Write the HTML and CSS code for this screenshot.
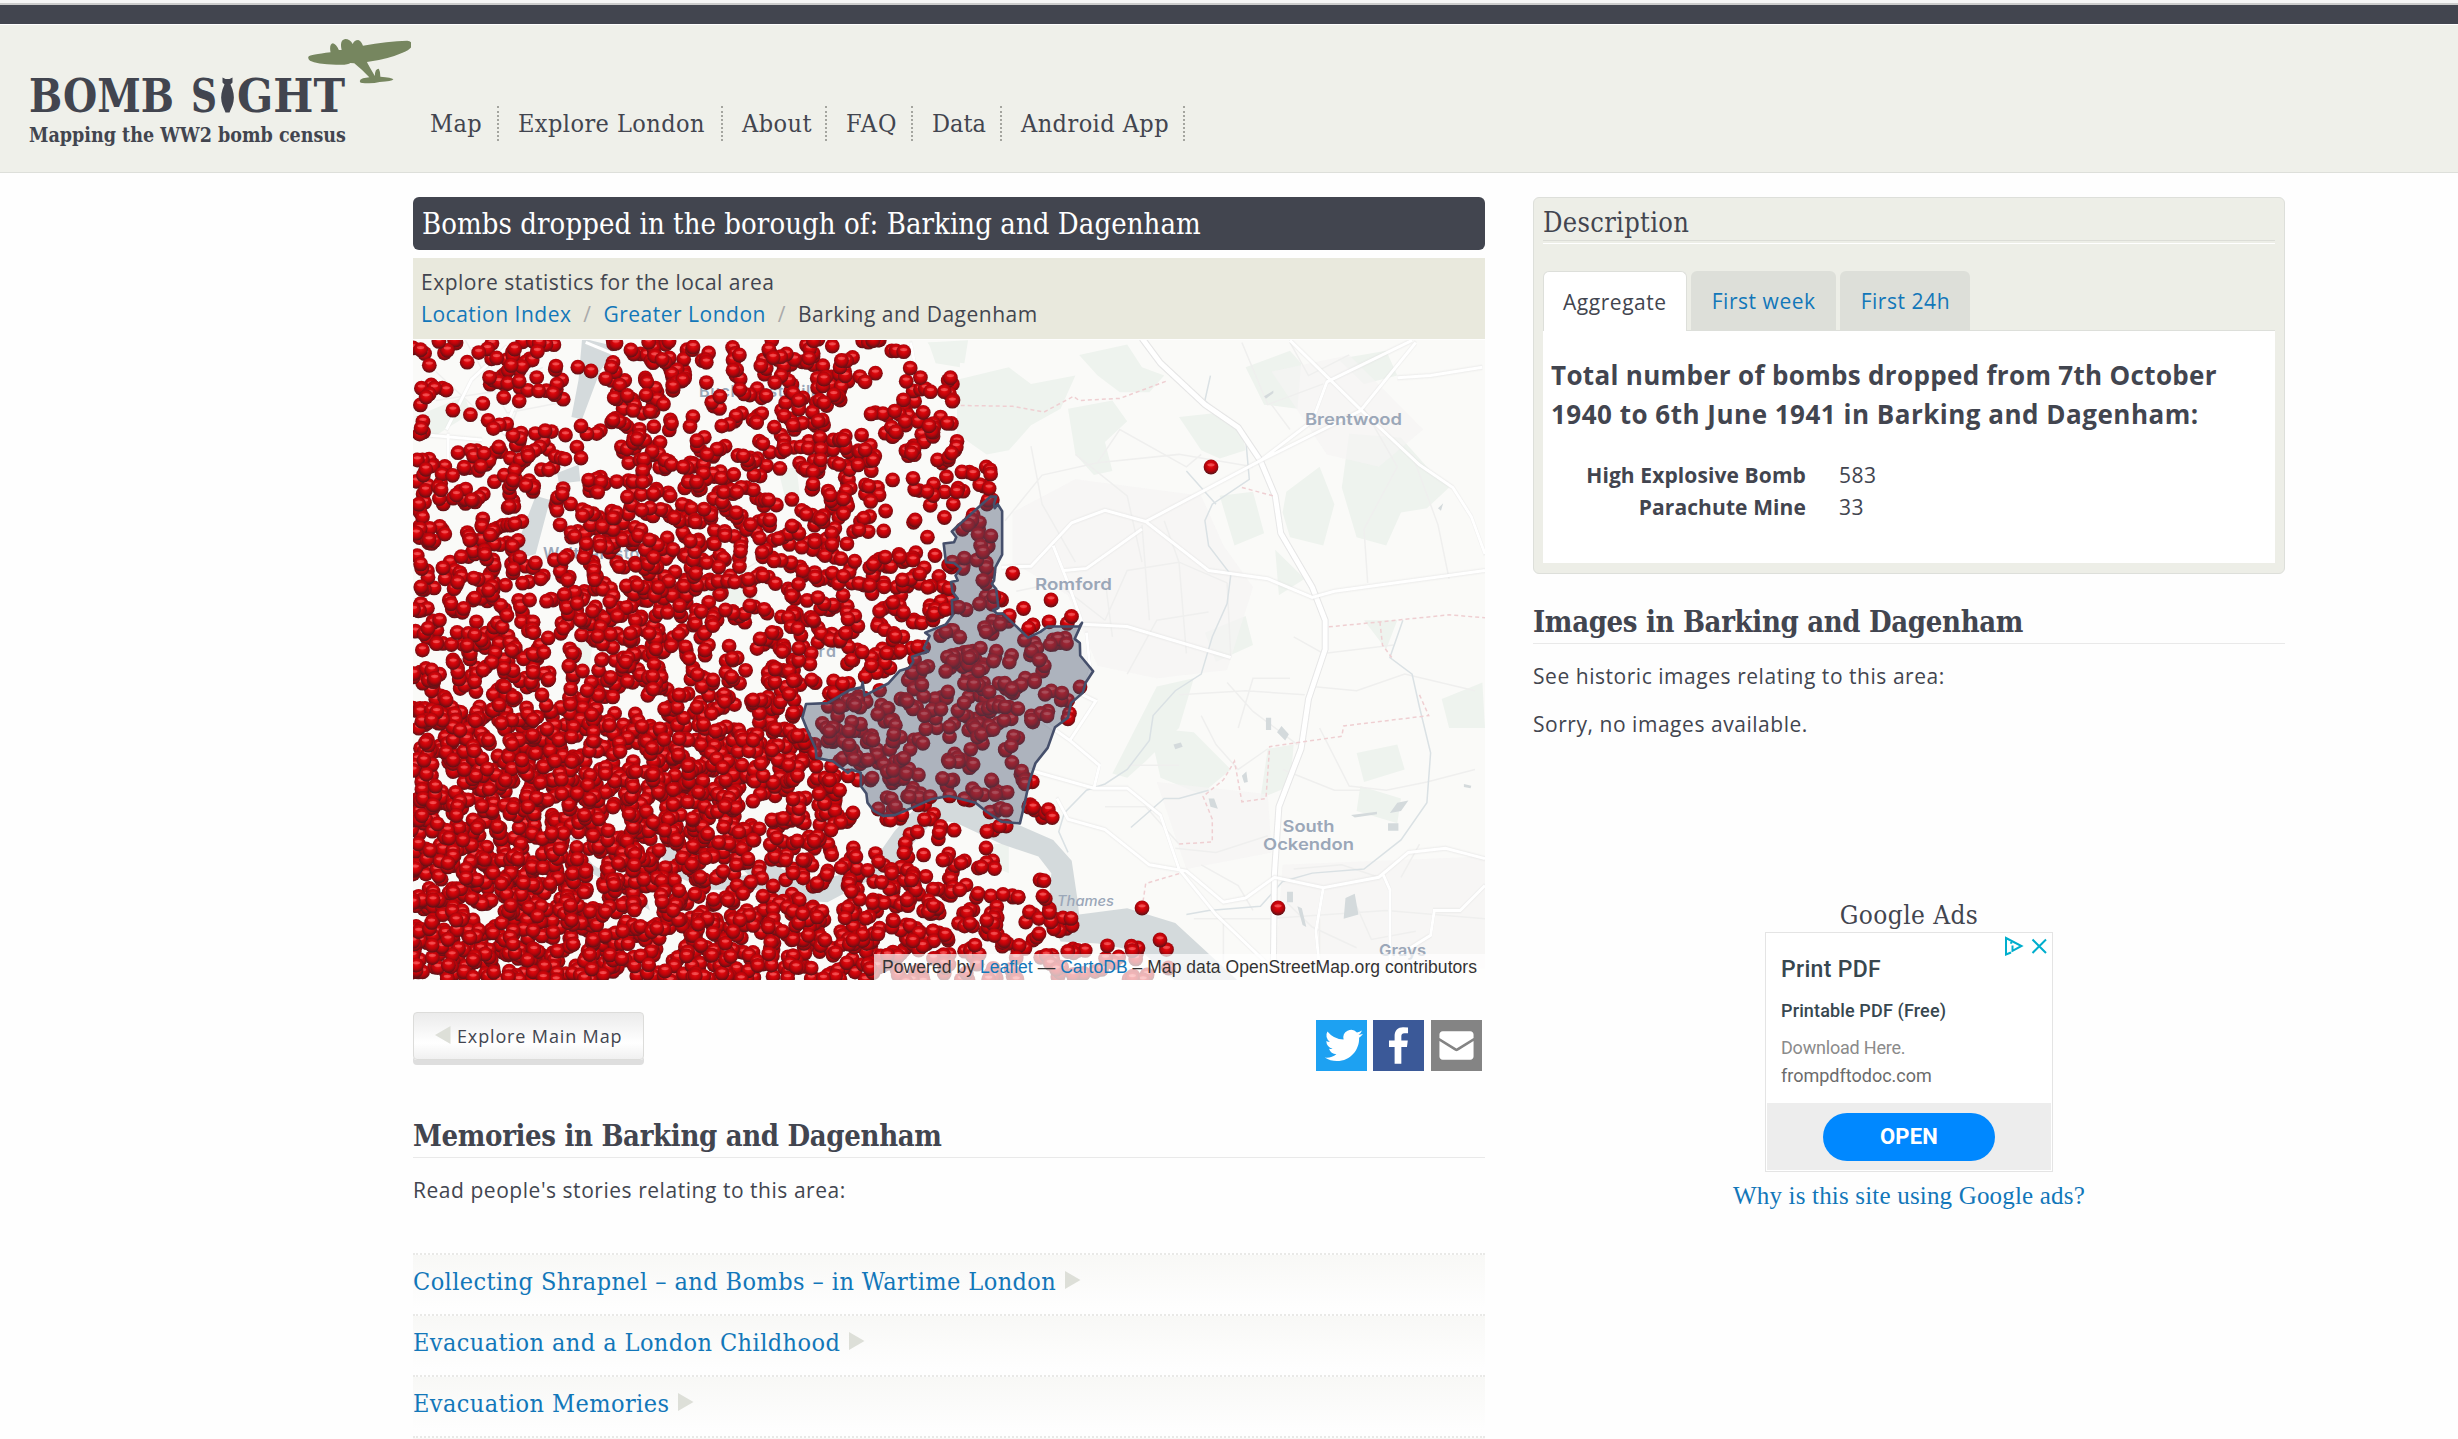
FILE: index.html
```html
<!DOCTYPE html>
<html lang="en">
<head>
<meta charset="utf-8">
<title>Bomb Sight - Barking and Dagenham</title>
<link rel="stylesheet" href="styles.css">
</head>
<body>
<div class="chrome-edge"></div>
<div class="topbar"></div>
<header class="header">
  <svg class="logo" width="386" height="130" viewBox="0 0 386 130" role="img" aria-label="Bomb Sight">
    <g class="logo-name">
      <text x="4" y="87" textLength="145" lengthAdjust="spacingAndGlyphs">BOMB</text>
      <text x="166" y="87" textLength="26" lengthAdjust="spacingAndGlyphs">S</text>
      <text x="212" y="87" textLength="108" lengthAdjust="spacingAndGlyphs">GHT</text>
    </g>
    <path class="logo-bomb" d="M197.500 52.500l3 1.500h4l3-1.500v5l-2 2c3 6 4 12 3 17-1 5-3 8-4 11h-4c-1-3-3-6-4-11-1-5 0-11 3-17l-2-2z"/>
    <text class="logo-tag" x="4" y="117" textLength="317" lengthAdjust="spacingAndGlyphs">Mapping the WW2 bomb census</text>
    <path class="logo-plane" transform="translate(-25 -25) scale(.3954 .3333)" d="M780 170Q785 164 836 157Q832 132 842 130Q850 132 857 150L864 150Q858 120 873 117Q885 117 892 132Q896 120 906 120Q914 124 918 137Q980 124 1030 122Q1042 124 1042 136Q1040 148 1018 158Q980 178 928 186Q932 196 948 228Q948 206 958 206Q962 214 962 230Q990 232 995 238Q992 244 960 246Q940 252 912 248Q906 240 918 235L934 232Q915 208 896 190L886 189Q880 196 850 194Q800 192 784 182Q778 176 780 170Z"/>
  </svg>
  <nav class="nav">
    <a class="n1">Map</a><a class="n2">Explore London</a><a class="n3">About</a><a class="n4">FAQ</a><a class="n5">Data</a><a class="n6">Android App</a>
  </nav>
</header>
<div class="page">
  <main class="main">
    <h1 class="title">Bombs dropped in the borough of: Barking and Dagenham</h1>
    <div class="crumbs">
      <div>Explore statistics for the local area</div>
      <div class="trail"><a>Location Index</a><i>/</i><a>Greater London</a><i>/</i><span>Barking and Dagenham</span></div>
    </div>
    <div class="map">
      <svg class="map-svg" width="1072" height="640" viewBox="0 0 1072 640">
        <defs>
          <radialGradient id="red" cx=".5" cy=".4" r=".6">
            <stop offset="0" stop-color="#ee2024"/><stop offset=".3" stop-color="#d8060b"/><stop offset=".6" stop-color="#b8040a"/><stop offset=".85" stop-color="#7c0d12"/><stop offset="1" stop-color="#551418"/>
          </radialGradient>
          <g id="ball"><circle r="7.400" fill="url(#red)"/><ellipse cy="-2.300" rx="3.600" ry="1.500" fill="#ff8080" opacity=".5"/></g>
        </defs>
        <g transform="translate(507 -10) scale(.37 .4146)">
          <g class="wood">
            <path d="M20 30L130 25L120 80L60 75ZM100 120L240 90L300 130L420 110L380 190L300 230L240 290L180 300L100 250ZM400 190L520 170L560 220L500 270L520 340L470 350L420 300ZM430 60L560 35L600 90L660 110L620 150L540 150L480 110ZM700 210L800 200L870 240L880 290L810 310L760 290ZM880 90L1000 50L1030 80L1020 190L930 180ZM1130 70L1260 50L1290 110L1200 130ZM1160 250L1300 260L1380 340L1430 380L1370 430L1300 440L1260 520L1180 500L1140 380ZM990 390L1080 330L1120 420L1090 520L1000 500L980 440ZM810 400L900 390L930 490L850 520ZM960 530L1040 600L970 640ZM770 730L880 690L900 760L800 800ZM1410 890L1520 850L1527 960L1430 960ZM1180 1020L1290 1000L1310 1060L1200 1090ZM940 1010L1010 1000L1000 1100L920 1130ZM640 860L740 840L700 960L610 1040L560 1080L520 1070ZM620 960L740 970L840 1060L760 1120L650 1080ZM1200 700L1290 700L1260 770ZM1190 1100L1300 1130L1290 1190L1180 1160ZM200 1240L240 1240L240 1310L190 1290Z"/>
            <path class="town" d="M250 440L420 360L760 400L820 520L900 620L830 820L640 840L480 810L400 640L250 560ZM980 1290L1527 1270V1540H960ZM640 1090L940 1120L950 1260L720 1300ZM950 100L1160 60L1360 240L1240 330L1100 300Z"/>
          </g>
          <g class="lane">
            <path d="M230 460L330 350L480 320L700 300L900 330M300 280L330 420L420 560M420 300L560 400L600 560M480 320L540 240L720 330L760 300M600 470L620 700M500 700L560 580L700 560L830 610M560 830L640 700L780 680M660 460L700 560L720 780M830 610L840 790M260 630L370 610L500 700M520 740L500 600M870 30L940 180L1090 130M950 180L1000 240M1160 60L1050 110L1000 30M1200 190L1290 330L1200 480L1210 610M1330 300L1400 470L1430 600M830 850L900 920L1020 1000M700 880L880 870L1040 880M1060 860L1180 870L1310 830L1500 870M1080 960L1160 1100L1260 1110L1370 1090L1500 1060M980 1060L1120 1110L1190 1110M760 930L800 1000L860 1060L940 1010M690 1250L800 1260L940 1220M500 1150L610 1150L700 1240M760 1290L860 1340L900 1400M1010 1300L1140 1290L1240 1320M1080 1420L1080 1540M1180 1390L1220 1470L1340 1450M1300 1320L1350 1240M990 1380L1060 1440L1180 1490M820 1420L820 1530M740 1420L940 1420L1260 1400L1527 1420M1010 740L1090 780L1280 760M1000 840L900 840L860 960M560 1050L700 1050"/>
          </g>
          <path class="stream" d="M785 110L770 170L880 260L890 360L790 420L770 460L780 520L840 590L830 660L790 740L760 830L690 870L630 930L620 990L560 1060L500 1095L450 1110L390 1165L375 1210L400 1260M720 340L800 420M570 1200L660 1130L700 1130L780 1110M1305 700L1270 790L1330 830L1350 910L1380 1020L1370 1140L1300 1230L1200 1300L1060 1310L980 1330L920 1390L780 1400L720 1410"/>
          <path class="pond" d="M935 935h14v30h-14zM965 970l12-15 20 20-10 15zM685 1000l20-5 5 10-20 6zM780 1130l15 0 10 25-20-5zM1270 1165l20-25 30-5-20 25zM1265 1190h28v18h-28zM1150 1370l25-10 10 50-40 10zM992 1355h16v25h-16zM1020 1390l12 5 12 45-10-5zM930 160l25-14v6l-20 14zM1400 430l14-12-6 18zM1470 1095l20 4-2 6-18-3zM1165 1170l70-8v6l-60 8zM870 1075l12-10 4 25-10 2z"/>
          <g class="road-case"><path d="M600 20L650 80L770 180L860 235L920 315L960 400L975 490L1060 620L1095 700L1095 770L1050 890L1030 1010L970 1150L958 1310L955 1540"/></g>
          <g class="road">
            <path class="wide" d="M600 20L650 80L770 180L860 235L920 315L960 400L975 490L1060 620L1095 700L1095 770L1050 890L1030 1010L970 1150L958 1310L955 1540"/>
            <path d="M220 572L300 570L410 465L500 435L610 462L920 315L1190 195L1340 30M610 462L780 580L940 600L1060 645L1120 630L1527 580M920 315L1060 220L1100 125L1330 25M1000 25L1200 200L1350 325L1440 380L1490 450L1527 540M1290 115L1380 110L1520 90M390 580L450 575L600 480M360 520L400 610L440 710L560 715L840 790M450 730L460 820L440 880L475 895L405 990L310 930M290 1060L470 1105L560 1105L650 1170L700 1300L800 1410L940 1530M370 1130L400 1180L500 1205L620 1290L720 1305L820 1380L880 1370L958 1320L1090 1345L1240 1320L1320 1260L1420 1250L1527 1275M405 990L485 1050L470 1105M1250 1310L1270 1350L1270 1540M1090 1345L1070 1450L1080 1540M1527 1340L1460 1400L1390 1400L1380 1460L1290 1510"/>
          </g>
          <path class="bound" d="M110 182L250 184L335 198L415 160L430 170L540 165L670 122M870 380L955 400M1105 716L1243 704L1430 687L1527 694M1243 704L1250 760L1275 790M1350 880L1375 930L1145 955L1140 980L945 1005L935 1130L870 1138L850 1040L820 1085L765 1125L790 1180L790 1235L695 1240M600 1395L610 1335L705 1310"/>
          <path class="water" d="M-70 1210L-10 1150L60 1120L150 1140L200 1180L270 1195L360 1230L410 1280L425 1370L430 1410L560 1395L690 1430L860 1570H690L600 1500L480 1480L380 1475L345 1400L355 1310L320 1270L220 1240L100 1190L40 1180L-80 1300L-250 1380L-400 1370L-480 1300L-420 1280L-300 1330L-140 1300Z"/>
        </g>
        <g transform="translate(-13 -10) scale(.3571 .4146)">
          <path class="water" d="M510 20L605 40L560 100L510 215L480 210L500 120ZM440 345L500 325L505 365L445 370ZM380 400L420 410L380 540L300 560L340 490ZM470 1220L500 1230L520 1300L700 1400L690 1370L540 1290ZM700 1240L760 1240L800 1280L870 1330L1060 1300L1110 1330L1090 1350L1020 1350L860 1350L780 1320Z"/>
          <path class="wood" d="M870 590L980 580L1010 670L860 650ZM480 760L540 750L530 820L490 820ZM1060 340L1110 330L1120 400L1080 410ZM1480 30H1568V90L1500 80ZM40 210L180 160L200 200L90 260Z"/>
          <g class="lane"><path d="M100 100L300 260L350 140M180 20L300 200L480 170M100 170L250 150L400 90M860 630L1000 560"/></g>
          <g class="road"><path d="M36 250L230 265M135 250V430M130 240L200 120L300 40M520 30L605 60M290 250L330 160M1430 30L1450 120M1000 290L1130 200"/></g>
        </g>
        <g class="places">
          <text x="286" y="57" textLength="116">Buckhurst Hill</text>
          <text x="375" y="317" textLength="48">Ilford</text>
          <text x="130" y="219" textLength="110">Walthamstow</text>
          <text x="892" y="84.500" textLength="97" lengthAdjust="spacingAndGlyphs">Brentwood</text>
          <text x="622" y="250" textLength="77" lengthAdjust="spacingAndGlyphs">Romford</text>
          <text x="869.500" y="491.500" textLength="52" lengthAdjust="spacingAndGlyphs">South</text>
          <text x="850" y="510" textLength="91" lengthAdjust="spacingAndGlyphs">Ockendon</text>
          <text x="966" y="616" textLength="47" lengthAdjust="spacingAndGlyphs">Grays</text>
          <text class="river-name" x="644" y="565.500" textLength="57" lengthAdjust="spacingAndGlyphs">Thames</text>
        </g>
        <g id="bombs"></g>
        <path class="borough" transform="translate(507 -10) scale(.37 .4146)" d="M190 402L206 402L200 420L202 430L210 420L222 437L222 542L204 572L200 605L194 612L206 625L212 670L198 676L208 684L224 684L292 742L325 728L345 715L430 715L438 706L418 745L432 755L433 785L468 823L448 850L440 875L408 900L400 935L365 958L345 1008L312 1045L295 1090L282 1145L270 1190L220 1186L180 1162L150 1140L78 1124L30 1132L-20 1152L-68 1170L-100 1172L-125 1160L-142 1140L-145 1118L-160 1100L-160 1068L-185 1060L-195 1068L-235 1040L-280 1032L-282 1010L-302 970L-318 935L-308 902L-250 900L-190 868L-158 862L-155 850L-150 882L-85 852L-55 822L-30 815L-18 800L-22 788L22 775L10 768L26 738L14 730L70 710L88 688L86 652L102 648L88 632L84 608L102 604L96 592L110 575L92 562L70 560L64 515L92 512L98 500L86 486L100 474Z"/>
      </svg>
      <div class="attribution">Powered by <a>Leaflet</a> — <a>CartoDB</a> – Map data OpenStreetMap.org contributors</div>
    </div>
    <div class="actions">
      <a class="button"><svg width="16" height="18" viewBox="0 0 16 18"><path d="M0 9L15.500 0V18Z" fill="#dddfd8"/></svg>Explore Main Map</a>
      <div class="share">
        <svg class="twitter" width="51" height="51" viewBox="0 0 32 32"><path d="M28 8.560a9.900 9.900 0 0 1-2.830.77 4.930 4.930 0 0 0 2.170-2.720 9.900 9.900 0 0 1-3.130 1.190 4.920 4.920 0 0 0-8.390 4.490A13.980 13.980 0 0 1 5.670 7.150a4.930 4.930 0 0 0 1.520 6.570 4.900 4.900 0 0 1-2.230-.61v.06a4.930 4.930 0 0 0 3.950 4.830 4.900 4.900 0 0 1-2.220.08 4.930 4.930 0 0 0 4.600 3.420A9.880 9.880 0 0 1 4 23.540a13.940 13.940 0 0 0 7.550 2.210c9.060 0 14.010-7.500 14.010-14.010l-.02-.64A10 10 0 0 0 28 8.560z" transform="translate(1.500)" fill="#fff"/></svg>
        <svg class="facebook" width="51" height="51" viewBox="0 0 32 32"><path d="M17.780 27.500V17.010h3.520l.53-4.090h-4.050v-2.610c0-1.180.33-1.990 2.030-1.990h2.170V4.660a29 29 0 0 0-3.160-.16c-3.120 0-5.260 1.900-5.260 5.400v3.010h-3.530v4.090h3.530V27.500h4.220z" fill="#fff"/></svg>
        <svg class="email" width="51" height="51" viewBox="0 0 32 32"><path d="M26.700 22.900c0 1.100-.9 2-2 2H7.300c-1.100 0-2-.9-2-2V13.200l9.800 6.100q.9.500 1.800 0l9.800-6.100zM26.700 11.300L16 17.900 5.300 11.300V9.100c0-1.100.9-2 2-2h17.400c1.100 0 2 .9 2 2z" fill="#fff"/></svg>
      </div>
    </div>
    <h2 class="heading">Memories in Barking and Dagenham</h2>
    <p class="text">Read people's stories relating to this area:</p>
    <ul class="stories">
      <li><a>Collecting Shrapnel – and Bombs – in Wartime London</a><svg width="16" height="18" viewBox="0 0 16 18"><path d="M0 0L15.500 9L0 18Z" fill="#dddfd8"/></svg></li>
      <li><a>Evacuation and a London Childhood</a><svg width="16" height="18" viewBox="0 0 16 18"><path d="M0 0L15.500 9L0 18Z" fill="#dddfd8"/></svg></li>
      <li><a>Evacuation Memories</a><svg width="16" height="18" viewBox="0 0 16 18"><path d="M0 0L15.500 9L0 18Z" fill="#dddfd8"/></svg></li>
      <li></li>
    </ul>
  </main>
  <aside class="side">
    <section class="card">
      <h3 class="card-title">Description</h3>
      <div class="tabs"><a class="tab active">Aggregate</a><a class="tab">First week</a><a class="tab">First 24h</a></div>
      <div class="panel">
        <h4 class="total">Total number of bombs dropped from 7th October<br><span class="range-end">1940 to 6th June 1941 in Barking and Dagenham:</span></h4>
        <dl class="counts"><dt>High Explosive Bomb</dt><dd>583</dd><dt>Parachute Mine</dt><dd>33</dd></dl>
      </div>
    </section>
    <h2 class="heading images">Images in Barking and Dagenham</h2>
    <p class="text">See historic images relating to this area:</p>
    <p class="text">Sorry, no images available.</p>
    <div class="ads">
      <div class="ads-title">Google Ads</div>
      <div class="ad">
        <div class="ad-body">
          <svg class="ad-icons" width="44" height="20" viewBox="0 0 44 20" fill="none" stroke="#00aecd" stroke-width="2"><path d="M7 16.500L2 18.500V2L17.500 10L8.500 14.800V9.500M7.200 6v1.800"/><path d="M28.500 3.500L42 17M42 3.500L28.500 17"/></svg>
          <div class="ad-head">Print PDF</div>
          <div class="ad-sub">Printable PDF (Free)</div>
          <div class="ad-text">Download Here.</div>
          <div class="ad-url">frompdftodoc.com</div>
        </div>
        <div class="ad-foot"><a class="open">OPEN</a></div>
      </div>
      <a class="ads-why">Why is this site using Google ads?</a>
    </div>
  </aside>
</div>
<script src="map.js"></script>
</body>
</html>
```
FILE: styles.css
```css
* { box-sizing: border-box; }
body {
  margin: 0;
  height: 1439px;
  overflow: hidden;
  background: #fefefe;
  color: #42454f;
  font: 21px/32px "Open Sans", sans-serif;
  letter-spacing: .54px;
}
h1, h2, h3, h4, p, ul, dl, dd { margin: 0; padding: 0; font-weight: 400; }
a { color: #1277b9; text-decoration: none; }
svg { display: block; letter-spacing: 0; }

.chrome-edge { height: 5px; background: #f5f5f5; border-bottom: 2px solid #ccc; }
.topbar { height: 20px; background: #42454f; border-bottom: 1px solid #fff; }
.header {
  display: flex;
  height: 148px;
  padding-left: 25px;
  background: #eff0ea;
  border-bottom: 1px solid #dddfda;
}
.logo-name { font: 700 46px "DejaVu Serif", serif; fill: #42454f; }
.logo-tag { font: 700 21px "DejaVu Serif", serif; fill: #42454f; }
.logo-bomb { fill: #42454f; }
.logo-plane { fill: #76865f; }
.nav { display: flex; padding-top: 81px; font: 25px/36px "DejaVu Serif Condensed", "DejaVu Serif", serif; letter-spacing: .44px; }
.nav a { height: 35px; color: #42454f; border-right: 2px dotted #a4a59f; padding-left: 19px; white-space: nowrap; }
.n1 { width: 88px; } .n2 { width: 224px; } .n3 { width: 104px; } .n4 { width: 86px; letter-spacing: 1.200px; } .n5 { width: 89px; letter-spacing: 0; } .n6 { width: 183px; }

.page { display: flex; gap: 48px; padding: 24px 0 0 413px; }
.main { width: 1072px; }
.title {
  height: 53px;
  padding-left: 9px;
  border-radius: 6px;
  background: #42454f;
  color: #fff;
  font: 29px/54px "DejaVu Serif Condensed", "DejaVu Serif", serif;
  letter-spacing: .06px;
  white-space: nowrap;
}
.crumbs { height: 81px; margin-top: 8px; padding: 8px 0 0 8px; background: #e9e9dd; letter-spacing: .5px; }
.trail { display: flex; }
.trail i { width: 32px; text-align: center; color: #aaa; font-style: normal; }
.map { position: relative; height: 640px; margin-top: 1px; background: #fafaf8; }
.wood { fill: #eef3ee; }
.town { fill: #f5f4f3; opacity: .7; }
.lane path { fill: none; stroke: #efefee; stroke-width: 1.500px; vector-effect: non-scaling-stroke; }
.stream { fill: none; stroke: #dae1e4; stroke-width: 1.500px; vector-effect: non-scaling-stroke; }
.pond, .water { fill: #d4dadc; }
.road path { fill: none; stroke: #fff; stroke-width: 3px; vector-effect: non-scaling-stroke; filter: drop-shadow(0 0 2px #ddd); }
.road .wide { stroke-width: 5px; }
.road-case path { fill: none; stroke: #e8e8e8; stroke-width: 7px; vector-effect: non-scaling-stroke; }
.bound { fill: none; stroke: #efcfd2; stroke-width: 1.500px; stroke-dasharray: 4 3; vector-effect: non-scaling-stroke; }
.places { font: 600 16px Inter, sans-serif; fill: #9ba7b8; }
.river-name { font-style: italic; font-weight: 500; font-size: 14px; }
.borough { fill: #42506c; fill-opacity: .42; stroke: #454f6b; stroke-width: 2.600px; vector-effect: non-scaling-stroke; stroke-linejoin: round; }
.attribution {
  position: absolute;
  right: 0;
  bottom: 0;
  height: 26px;
  padding: 0 8px;
  background: rgba(255, 255, 255, .7);
  color: #333;
  font: 17.500px/26px "Liberation Sans", sans-serif;
  letter-spacing: .05px;
  white-space: nowrap;
}
.actions { display: flex; justify-content: space-between; padding: 32px 3px 0 0; height: 128px; }
.button {
  display: flex;
  width: 231px;
  height: 48px;
  padding: 0 0 0 21px;
  border: 1px solid #dcdcda;
  border-radius: 4px;
  box-shadow: 0 5px 0 #dedede;
  background: linear-gradient(#ebebeb, #fff 65%, #f0f0f0);
  color: #42454f;
  font-size: 18px;
  line-height: 46px;
  letter-spacing: .86px;
  white-space: nowrap;
}
.button svg { margin: 13px 6px 0 0; }
.share { display: flex; gap: 6px; padding-top: 8px; }
.twitter { background: #1da1f2; } .facebook { background: #3b5998; } .email { background: #848484; margin-left: 1px; }
.heading { height: 50px; border-bottom: 1px solid #e9e9e9; font: 700 29px/57px "DejaVu Serif Condensed", "DejaVu Serif", serif; letter-spacing: -.34px; white-space: nowrap; }
.text { padding-top: 16px; }
.stories { list-style: none; margin-top: 47px; }
.stories li { display: flex; gap: 9px; height: 61px; border-top: 2px dotted #e9e9e7; background: linear-gradient(#f8f8f6, #fefefe 90%); font: 25px/54px "DejaVu Serif Condensed", "DejaVu Serif", serif; letter-spacing: .42px; white-space: nowrap; }
.stories svg { margin-top: 16px; }

.side { width: 752px; }
.card { height: 377px; padding: 7px 9px 0; border: 1px solid #dddfda; border-radius: 6px; background: #edeee7; }
.card-title { height: 39px; line-height: 36px; font-family: "DejaVu Serif Condensed", "DejaVu Serif", serif; font-size: 27px; letter-spacing: .32px; border-bottom: 1px solid #fff; box-shadow: inset 0 -2px 0 #edeee7, inset 0 -3px 0 #dcddd7; }
.tabs { display: flex; gap: 4px; margin-top: 27px; height: 60px; border-bottom: 1px solid #dddfda; }
.tab { height: 59px; padding: 0 20px 0 21px; border-radius: 6px 6px 0 0; background: #dddfd9; line-height: 60px; white-space: nowrap; }
.active { height: 60px; padding: 0 19px; background: #fff; color: #42454f; border: 1px solid #dddfda; border-bottom: 0; }
.panel { height: 232px; background: #fff; padding: 25px 8px 0; }
.total { font: 700 26px/39px "Open Sans", sans-serif; letter-spacing: .32px; white-space: nowrap; }
.range-end { letter-spacing: .5px; }
.counts { display: grid; grid-template-columns: 255px 1fr; column-gap: 33px; margin-top: 25px; }
.counts dt { font-weight: 700; text-align: right; letter-spacing: .1px; }
.images { height: 70px; padding-top: 20px; }
.ads { display: flex; flex-direction: column; align-items: center; margin-top: 158px; }
.ads-title { font: 26px/35px "DejaVu Serif Condensed", "DejaVu Serif", serif; height: 34px; letter-spacing: .4px; }
.ad { width: 288px; height: 240px; border: 1px solid #e4e4e4; padding: 1px; background: #fff; font-family: Roboto, sans-serif; letter-spacing: 0; }
.ad-body { position: relative; height: 169px; padding: 18px 0 0 14px; }
.ad-icons { position: absolute; right: 3px; top: 2px; }
.ad-head { font-size: 23px; font-weight: 500; line-height: 36px; color: #37474f; letter-spacing: .31px; }
.ad-sub { font-size: 18px; font-weight: 500; line-height: 36px; margin-top: 5px; color: #37474f; letter-spacing: .14px; }
.ad-text { font-size: 18px; line-height: 30px; margin-top: 4px; color: #8b8b8b; letter-spacing: -.2px; }
.ad-url { font-size: 18px; line-height: 25px; color: #6b6b6b; }
.ad-foot { display: flex; justify-content: center; height: 67px; padding-top: 10px; background: #ededed; }
.open { width: 172px; height: 48px; border-radius: 24px; background: #0088ff; color: #fff; font-size: 22px; font-weight: 700; line-height: 48px; text-align: center; letter-spacing: .2px; }
.ads-why { font: 25px/32px "Liberation Serif", serif; letter-spacing: .18px; margin-top: 8px; }
```
FILE: map.js
```js
// Bomb counts per 20px cell of the map, row by row.
const rows = [
  "2222243100344311333432232000",
  "1011331211334420323244111110",
  "3202322301433311223334101330",
  "1111010000433103233330034320",
  "3001232112423112013342124440",
  "2022343210344034332355423322",
  "33231420011554343213443101222",
  "33333312243342343312243302322",
  "313131034444333321124431011130",
  "42343203344414223433542102033",
  "31344203344444443314330232103",
  "322432242324323233334323233231",
  "213442014544545410231342324032",
  "423322234454544232444213334231",
  "3333342324424342123343133331432110",
  "144444430444432313421322333433234",
  "555544331444432314430233222421130",
  "3551441334334344144234212334443310",
  "5556555543114343144213432423433230",
  "6656566664666555655434333232432",
  "666566666556666556663444310312",
  "66666666666666656666434441230130",
  "66666666666666662354531333333330",
  "66666666666666665135420233101243",
  "66666666666666666144220011311200",
  "66666666265525665444412131200000",
  "66666666666654433234323341222100",
  "665666665666332233133434434321330",
  "666666666655666656655544444332132",
  "666666666666656665555555444333133",
  "66666666666536665554554544433332221221",
  "66666666666566665555444444333333333321"
];
// Single bombs that stand apart from the clusters.
const singles = [[798,127],[729,568],[865,568],[610.500,268.500],[638,260],[658.500,276.500],[667,347],[747,600],[573,508],[568.500,527],[440,473],[178,31],[168,118],[168,86]];
let seed = 41;
const rnd = () => (seed = (seed * 16807) % 2147483647) / 2147483647;
const points = [];
rows.forEach((row, r) => [...row].forEach((n, c) => {
  const count = +n > 1 ? Math.round(n * 1.45) : +n;
  const left = c * 20, top = r * 20;
  let x = 0, y = 0, angle = 0;
  for (let i = 0; i < count; i++) {
    // Bombs fall in sticks, so most follow the one before at a short step.
    if (i === 0 || rnd() < .3) {
      x = left + rnd() * 20;
      y = top + rnd() * 20;
      angle = rnd() * 6.28;
    } else {
      angle += (rnd() - .5) * 1.2;
      x += Math.cos(angle) * (4 + rnd() * 4);
      y += Math.sin(angle) * (3 + rnd() * 4);
      if (x < left - 2 || x > left + 22 || y < top - 2 || y > top + 22) {
        x = Math.min(left + 20, Math.max(left, x));
        y = Math.min(top + 20, Math.max(top, y));
        angle += 2.2;
      }
    }
    points.push([x, y]);
  }
}));
for (let i = points.length - 1; i > 0; i--) {
  const j = Math.floor(rnd() * (i + 1));
  [points[i], points[j]] = [points[j], points[i]];
}
document.getElementById("bombs").innerHTML = points.concat(singles)
  .map(([x, y]) => `<use href="#ball" x="${x.toFixed(1)}" y="${y.toFixed(1)}"/>`).join("");
```
